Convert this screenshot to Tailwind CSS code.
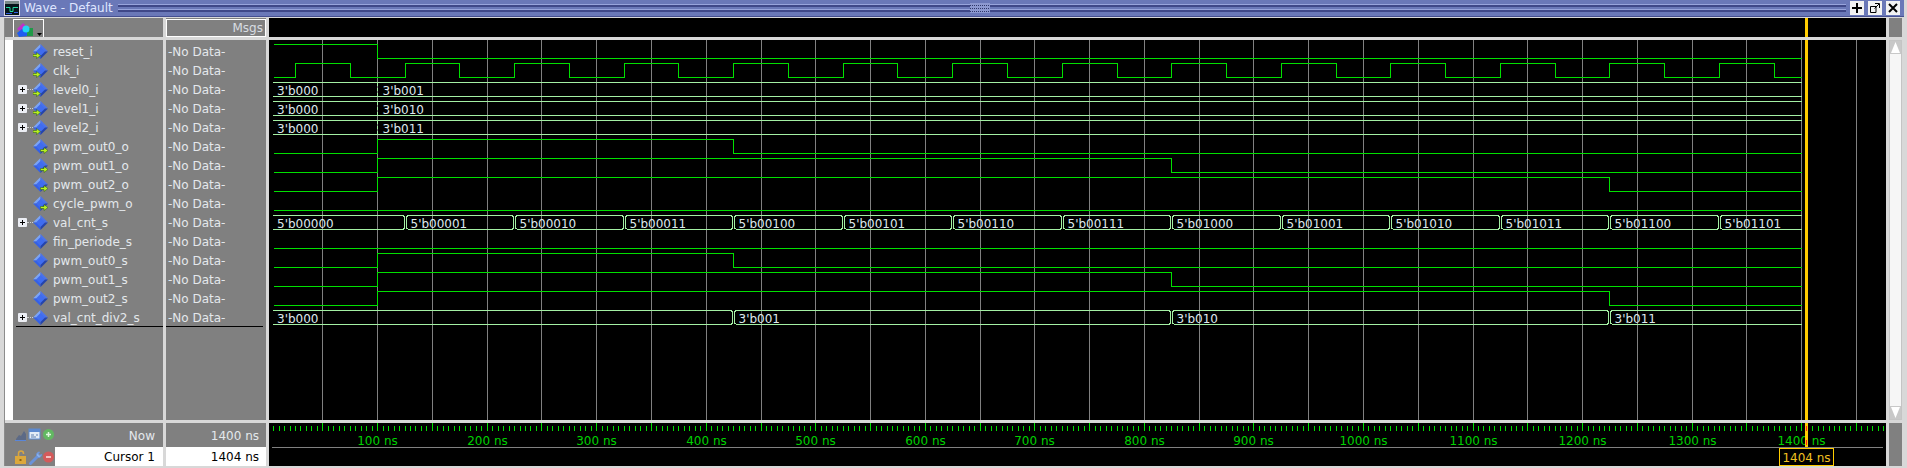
<!DOCTYPE html>
<html lang="en">
<head>
    <meta charset="UTF-8">
    <title>Wave - Default</title>
    <script src="https://cdn.jsdelivr.net/npm/@tailwindcss/browser@4"></script>
</head>
<body class="bg-[#d8d8d8] overflow-hidden font-['DejaVu_Sans',sans-serif] text-[12px] leading-none text-[#e4e8ec]">

    <!-- shared icons -->
    <svg class="hidden">
        <symbol id="diamond" viewBox="0 0 15 15">
            <polygon points="7.5,0 0,7.5 7.5,7.5" fill="#7ba4f6"/>
            <polygon points="7.5,0 15,7.5 7.5,7.5" fill="#4a72ea"/>
            <polygon points="0,7.5 7.5,15 7.5,7.5" fill="#3460e6"/>
            <polygon points="15,7.5 7.5,15 7.5,7.5" fill="#2444ac"/>
            <polygon points="7.5,3 3,7.5 7.5,12 12,7.5" fill="#3f6cf0"/>
        </symbol>
        <symbol id="sig-in" viewBox="0 0 15 15">
            <use href="#diamond"/>
            <path d="M0 10.5h3.5V8.5L7.5 11.5 3.5 14.5V12.5H0z" fill="#b8f020" stroke="#2a5a10" stroke-width=".5"/>
        </symbol>
        <symbol id="sig-out" viewBox="0 0 15 15">
            <use href="#diamond"/>
            <path d="M7.5 10.5h3.5V8.5L15 11.5 11 14.5V12.5H7.5z" fill="#b8f020" stroke="#2a5a10" stroke-width=".5"/>
        </symbol>
        <symbol id="expand" viewBox="0 0 9 9">
            <rect x="0" y="0" width="9" height="9" rx="1" fill="#eceef4"/>
            <path d="M2 4.5h5M4.5 2v5" stroke="#000" stroke-width="1"/>
        </symbol>
    </svg>

    <div class="w-[1907px] h-[468px] flex flex-col">
        <!-- title bar -->
        <div class="h-[17px] w-[1904px] bg-[#6a78b8] border-b border-[#454f90] flex items-center relative">
            <svg class="ml-[4px] shrink-0" width="16" height="16" viewBox="0 0 16 16">
                <rect width="16" height="16" fill="#d8d8e8"/>
                <rect x="1" y="1" width="14" height="14" fill="#06141a"/>
                <rect x="1" y="1" width="14" height="3" fill="#7a8a8a"/>
                <path d="M2 7.5h4v4h3v-4h5" fill="none" stroke="#20d8a0"/>
                <path d="M2 13.5h6M10 12.5h4" fill="none" stroke="#3060e0"/>
            </svg>
            <span class="ml-[4px] w-[94px] text-[#dfe6ff]">Wave - Default</span>
            <div class="w-[1728px] flex flex-col gap-[2px]">
                <div class="h-[3px] border-t border-[#98a4dc] bg-[#3f4888]"></div>
                <div class="h-[3px] border-t border-[#98a4dc] bg-[#3f4888]"></div>
            </div>
            <svg class="absolute left-[970px] top-[3px]" width="20" height="10" viewBox="0 0 20 10">
                <rect width="20" height="10" fill="#8c98d0"/>
                <path d="M0 2.5h20M0 5.5h20M0 8.5h20" stroke="#2e3668" stroke-dasharray="1 1"/>
            </svg>
            <div class="absolute left-[1850px] top-[1px] flex gap-[4px]">
                <div class="w-[14px] h-[14px] bg-[#f2f2f2] flex items-center justify-center">
                    <svg width="10" height="10" viewBox="0 0 10 10"><path d="M5 0v10M0 5h10" stroke="#000" stroke-width="2"/></svg>
                </div>
                <div class="w-[14px] h-[14px] bg-[#f2f2f2] flex items-center justify-center">
                    <svg width="10" height="10" viewBox="0 0 10 10"><path d="M.5 3.5h5.500v6h-5.500zM5 .5h4.500V5M9 1 4.500 5.500" fill="none" stroke="#000"/></svg>
                </div>
                <div class="w-[14px] h-[14px] bg-[#f2f2f2] flex items-center justify-center">
                    <svg width="10" height="10" viewBox="0 0 10 10"><path d="M1 1l8 8M9 1l-8 8" stroke="#000" stroke-width="2"/></svg>
                </div>
            </div>
        </div>

        <!-- panes -->
        <div class="mt-[1px] ml-[5px] grid grid-cols-[158px_100px_1617px_13px] grid-rows-[19px_380px_43px] gap-x-[3px] gap-y-[3px] border-l border-[#8c8c8c] w-[1897px] -translate-x-px">

            <!-- header row -->
            <div class="bg-[#808080] pt-px pl-[8px]">
                <div class="w-[31px] h-[18px] border-x border-t border-white relative">
                    <svg class="absolute left-[3px] top-[3px]" width="25" height="15" viewBox="0 0 25 15">
                        <polygon points="6,0 11,5 6,10 0,6" fill="#c030c8"/>
                        <rect x="8" y="5" width="8" height="8" fill="#1f9a48"/>
                        <polygon points="0,10 5,6 10,8 10,13 2,14" fill="#1f5cf0"/>
                        <circle cx="9" cy="6" r="3.500" fill="#22d4f2"/>
                        <polygon points="20,10 25,10 22.500,13" fill="#000"/>
                    </svg>
                </div>
            </div>
            <div class="bg-[#808080] pt-px">
                <div class="h-[18px] border border-white flex items-center justify-end pr-[2px] text-[#d8dde2]">Msgs</div>
            </div>
            <div class="bg-black relative">
                <div class="absolute left-[1536px] top-0 bottom-0 w-[3px] bg-[#ffcc00]"></div>
            </div>
            <div class="bg-[#808080]"></div>

            <!-- signal names -->
            <div class="bg-[#808080] flex">
                <div class="w-[8px] bg-white shrink-0"></div>
                <div class="flex-1 pt-[2px] flex flex-col">
                    <div class="h-[19px] flex items-center pl-[20px]"><svg width="15" height="15"><use href="#sig-in"/></svg><span class="ml-[5px]">reset_i</span></div>
                    <div class="h-[19px] flex items-center pl-[20px]"><svg width="15" height="15"><use href="#sig-in"/></svg><span class="ml-[5px]">clk_i</span></div>
                    <div class="h-[19px] flex items-center pl-[5px]"><svg width="9" height="9"><use href="#expand"/></svg><span class="w-[6px] border-t border-dotted border-[#d0d0d0]"></span><svg width="15" height="15"><use href="#sig-in"/></svg><span class="ml-[5px]">level0_i</span></div>
                    <div class="h-[19px] flex items-center pl-[5px]"><svg width="9" height="9"><use href="#expand"/></svg><span class="w-[6px] border-t border-dotted border-[#d0d0d0]"></span><svg width="15" height="15"><use href="#sig-in"/></svg><span class="ml-[5px]">level1_i</span></div>
                    <div class="h-[19px] flex items-center pl-[5px]"><svg width="9" height="9"><use href="#expand"/></svg><span class="w-[6px] border-t border-dotted border-[#d0d0d0]"></span><svg width="15" height="15"><use href="#sig-in"/></svg><span class="ml-[5px]">level2_i</span></div>
                    <div class="h-[19px] flex items-center pl-[20px]"><svg width="15" height="15"><use href="#sig-out"/></svg><span class="ml-[5px]">pwm_out0_o</span></div>
                    <div class="h-[19px] flex items-center pl-[20px]"><svg width="15" height="15"><use href="#sig-out"/></svg><span class="ml-[5px]">pwm_out1_o</span></div>
                    <div class="h-[19px] flex items-center pl-[20px]"><svg width="15" height="15"><use href="#sig-out"/></svg><span class="ml-[5px]">pwm_out2_o</span></div>
                    <div class="h-[19px] flex items-center pl-[20px]"><svg width="15" height="15"><use href="#sig-out"/></svg><span class="ml-[5px]">cycle_pwm_o</span></div>
                    <div class="h-[19px] flex items-center pl-[5px]"><svg width="9" height="9"><use href="#expand"/></svg><span class="w-[6px] border-t border-dotted border-[#d0d0d0]"></span><svg width="15" height="15"><use href="#diamond"/></svg><span class="ml-[5px]">val_cnt_s</span></div>
                    <div class="h-[19px] flex items-center pl-[20px]"><svg width="15" height="15"><use href="#diamond"/></svg><span class="ml-[5px]">fin_periode_s</span></div>
                    <div class="h-[19px] flex items-center pl-[20px]"><svg width="15" height="15"><use href="#diamond"/></svg><span class="ml-[5px]">pwm_out0_s</span></div>
                    <div class="h-[19px] flex items-center pl-[20px]"><svg width="15" height="15"><use href="#diamond"/></svg><span class="ml-[5px]">pwm_out1_s</span></div>
                    <div class="h-[19px] flex items-center pl-[20px]"><svg width="15" height="15"><use href="#diamond"/></svg><span class="ml-[5px]">pwm_out2_s</span></div>
                    <div class="h-[19px] flex items-center pl-[5px] relative"><svg width="9" height="9"><use href="#expand"/></svg><span class="w-[6px] border-t border-dotted border-[#d0d0d0]"></span><svg width="15" height="15"><use href="#diamond"/></svg><span class="ml-[5px]">val_cnt_div2_s</span><div class="absolute left-[3px] right-0 bottom-0 h-px bg-black"></div></div>
                </div>
            </div>

            <!-- values -->
            <div class="bg-[#808080] pt-[2px] pl-[2px] flex flex-col">
                <div class="h-[19px] flex items-center">-No Data-</div>
                <div class="h-[19px] flex items-center">-No Data-</div>
                <div class="h-[19px] flex items-center">-No Data-</div>
                <div class="h-[19px] flex items-center">-No Data-</div>
                <div class="h-[19px] flex items-center">-No Data-</div>
                <div class="h-[19px] flex items-center">-No Data-</div>
                <div class="h-[19px] flex items-center">-No Data-</div>
                <div class="h-[19px] flex items-center">-No Data-</div>
                <div class="h-[19px] flex items-center">-No Data-</div>
                <div class="h-[19px] flex items-center">-No Data-</div>
                <div class="h-[19px] flex items-center">-No Data-</div>
                <div class="h-[19px] flex items-center">-No Data-</div>
                <div class="h-[19px] flex items-center">-No Data-</div>
                <div class="h-[19px] flex items-center">-No Data-</div>
                <div class="h-[19px] flex items-center relative">-No Data-<div class="absolute -left-[2px] right-[3px] bottom-0 h-px bg-black"></div></div>
            </div>

            <!-- waveforms, filled in below -->
            <div class="bg-black">
                <svg id="waves" class="block" width="1617" height="380"></svg>
            </div>

            <!-- scrollbar -->
            <div class="flex flex-col bg-[#c4c4c4] px-[1px] py-[1px]">
                <svg class="block" width="11" height="13" viewBox="0 0 11 13"><rect width="11" height="13" fill="#c8c8c8"/><polygon points="5.500,1 10,12 1,12" fill="#fff"/></svg>
                <div class="flex-1 bg-[#f6f6f6]"></div>
                <svg class="block" width="11" height="13" viewBox="0 0 11 13"><rect width="11" height="13" fill="#c8c8c8"/><polygon points="5.500,12 10,1 1,1" fill="#fff"/></svg>
            </div>

            <!-- now / cursor -->
            <div class="bg-[#808080] flex flex-col">
                <div class="h-[24px] flex items-center justify-end pr-[8px] relative">
                    <span class="mt-[1px]">Now</span>
                    <svg class="absolute left-[10px] top-[5px]" width="40" height="14" viewBox="0 0 40 14">
                        <path d="M1 11l3-4 2 1 3-5 2 3v6H1z" fill="#5c6a86"/><path d="M0 12.500h11" stroke="#5a86d8"/>
                        <rect x="14" y="1" width="11" height="10" fill="#e4ecf6" stroke="#5d8ad0"/><rect x="14" y="1" width="11" height="3" fill="#5d8ad0"/>
                        <path d="M16 7h3M21 7h2M16 9h5" stroke="#6080b0"/>
                        <circle cx="33.500" cy="6.500" r="5.500" fill="#62b862"/><path d="M31 6.500h5M33.500 4v5" stroke="#dff5df" stroke-width="1.500"/>
                    </svg>
                </div>
                <div class="flex-1 flex items-stretch relative">
                    <svg class="absolute left-[10px] top-[2px]" width="40" height="17" viewBox="0 0 40 17">
                        <path d="M3.500 7V4.500a2.500 2.500 0 0 1 5 0V5" fill="none" stroke="#d9a63f" stroke-width="1.500"/><rect x="0" y="7" width="11" height="8" fill="#dca83c"/><rect x="4.500" y="10" width="2" height="2" fill="#8a6414"/>
                        <path d="M15.500 14.500 22 8" stroke="#6a92d8" stroke-width="3" stroke-linecap="round"/>
                        <path d="M21.500 6.500a3 3 0 0 1 3-3.500l-1 2 1.500 1.500 1.500-1.500a3 3 0 0 1-3.500 3.500z" fill="#8ab0ea" stroke="#6a92d8"/>
                        <circle cx="33.500" cy="8" r="5.500" fill="#d45a5a"/><path d="M31 8h5" stroke="#fbe4e4" stroke-width="1.500"/>
                    </svg>
                    <div class="ml-[50px] flex-1 bg-white text-black flex items-center justify-end pr-[8px]">Cursor 1</div>
                </div>
            </div>
            <div class="bg-[#808080] flex flex-col">
                <div class="h-[24px] flex items-center justify-end pr-[7px]"><span class="mt-[1px]">1400 ns</span></div>
                <div class="flex-1 bg-white text-black flex items-center justify-end pr-[7px]">1404 ns</div>
            </div>
            <div class="bg-black">
                <svg id="timeline" class="block" width="1617" height="43"></svg>
            </div>
            <div class="bg-[#808080]"></div>
        </div>
    </div>

    <script>
        const NS = 'http://www.w3.org/2000/svg';
        const GREEN = '#00e000';
        const BUS = '#a4f0a4';
        const GRID = '#808080';
        const CURSOR = '#ffcc00';
        const END_T = 1400;

        const waves = document.getElementById('waves');
        const timeline = document.getElementById('timeline');

        // time in ns to pixel column inside the wave pane
        const X = t => Math.round(267.6 + 1.0954 * t) - 269 + 0.5;
        const hi = i => 4.5 + 19 * i;
        const lo = i => 18.5 + 19 * i;

        function add(parent, tag, attrs, text) {
            const el = document.createElementNS(NS, tag);
            for (const k in attrs) el.setAttribute(k, attrs[k]);
            if (text) el.textContent = text;
            parent.appendChild(el);
            return el;
        }

        function line(parent, d, stroke) {
            add(parent, 'path', { d, stroke, fill: 'none', 'shape-rendering': 'crispEdges' });
        }

        // one bit signal: starting level plus the times it toggles
        function digital(row, startHigh, edges) {
            let level = startHigh;
            let d = `M4.5 ${level ? hi(row) : lo(row)}`;
            edges.forEach(t => {
                level = !level;
                d += ` H${X(t)} V${level ? hi(row) : lo(row)}`;
            });
            line(waves, d + ` H${X(END_T)}`, GREEN);
        }

        // bus signal: list of [time, label], zero-width change when tight is set
        function bus(row, segs, tight) {
            const h = hi(row), l = lo(row), end = X(END_T);
            segs.forEach(([t, label], n) => {
                const x = X(t);
                const next = n + 1 < segs.length ? X(segs[n + 1][0]) : end;
                const from = t === 0 ? 3.5 : tight ? x : x + 2;
                const to = n + 1 < segs.length && !tight ? next - 2 : next;
                line(waves, `M${from} ${h} H${to} M${from} ${l} H${to}`, BUS);
                if (t > 0) {
                    if (tight) {
                        add(waves, 'path', { d: `M${x} ${h} V${l}`, stroke: BUS, fill: 'none', 'stroke-dasharray': '3 2', 'shape-rendering': 'crispEdges' });
                    } else {
                        line(waves, `M${x - 2} ${h} L${x - 1} ${h + 2} V${l - 2} L${x - 2} ${l} M${x + 2} ${h} L${x + 1} ${h + 2} V${l - 2} L${x + 2} ${l}`, BUS);
                    }
                }
                add(waves, 'text', { x: t === 0 ? 8 : x + 5, y: l - 2, fill: '#dfe8ee', 'font-size': 12 }, label);
            });
        }

        // grid every 50 ns
        for (let t = 50; t <= 1450; t += 50) {
            line(waves, `M${X(t)} 0 V380`, GRID);
        }

        digital(0, true, [100]);
        const clk = [];
        for (let t = 25; t < END_T; t += 50) clk.push(t);
        digital(1, false, clk);

        bus(2, [[0, "3'b000"], [100, "3'b001"]], true);
        bus(3, [[0, "3'b000"], [100, "3'b010"]], true);
        bus(4, [[0, "3'b000"], [100, "3'b011"]], true);

        digital(5, false, [100, 425]);
        digital(6, false, [100, 825]);
        digital(7, false, [100, 1225]);
        digital(8, false, []);

        const cnt = [[0, "5'b00000"]];
        for (let n = 1; n <= 13; n++) {
            cnt.push([25 + 100 * n, "5'b" + n.toString(2).padStart(5, '0')]);
        }
        bus(9, cnt);

        digital(10, false, []);
        digital(11, false, [100, 425]);
        digital(12, false, [100, 825]);
        digital(13, false, [100, 1225]);

        bus(14, [[0, "3'b000"], [425, "3'b001"], [825, "3'b010"], [1225, "3'b011"]]);

        add(waves, 'rect', { x: 1536, y: 0, width: 3, height: 380, fill: CURSOR });

        // time axis
        let ticks = '';
        for (let t = 5; t <= 1475; t += 5) {
            ticks += `M${X(t)} ${t % 50 === 0 ? 0 : 3} V8 `;
        }
        line(timeline, ticks, GREEN);
        for (let t = 100; t <= 1400; t += 100) {
            add(timeline, 'text', { x: X(t), y: 22, fill: '#00d000', 'font-size': 12, 'text-anchor': 'middle' }, `${t} ns`);
        }
        line(timeline, 'M3 24.5 H1614', GRID);
        add(timeline, 'rect', { x: 1536, y: 0, width: 3, height: 24, fill: CURSOR });
        line(timeline, 'M1537.5 3 V8 M1537.5 17 V22', '#ff2020');
        add(timeline, 'rect', { x: 1510.5, y: 25.5, width: 54, height: 17, fill: '#000', stroke: CURSOR });
        add(timeline, 'text', { x: 1537.5, y: 39, fill: '#f2c020', 'font-size': 12, 'text-anchor': 'middle' }, '1404 ns');
    </script>
</body>
</html>
